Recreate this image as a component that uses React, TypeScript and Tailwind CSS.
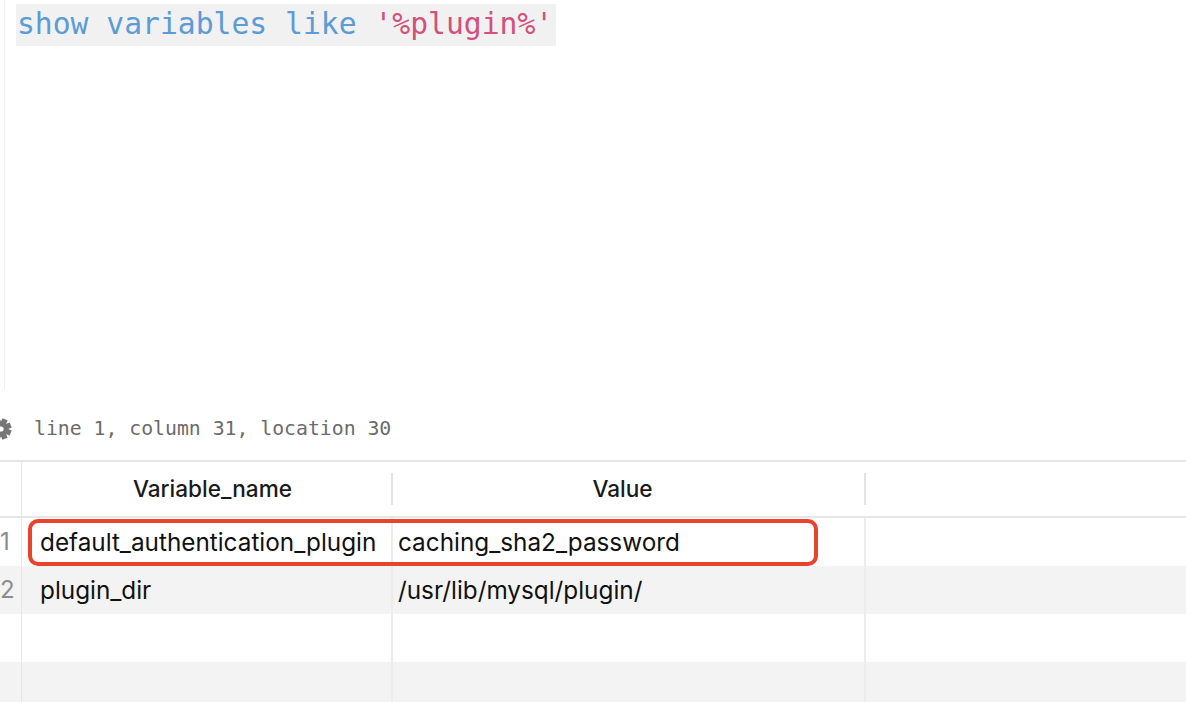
import React from "react";

const mono = { fontFamily: '"DejaVu Sans Mono", "Liberation Mono", monospace' };
const sans = { fontFamily: 'Inter, "Liberation Sans", sans-serif' };

function Gear() {
  const teeth = [];
  for (let i = 0; i < 8; i++) {
    teeth.push(
      <rect key={i} x={-2.8} y={-10.5} width={5.6} height={6} fill="#767676" transform={`rotate(${i * 45 + 22.5})`} />
    );
  }
  return (
    <svg width="13" height="22" viewBox="-1 -11 13 22" className="block">
      <g>
        {teeth}
        <circle cx={0} cy={0} r={7.6} fill="#767676" />
        <circle cx={0} cy={0} r={2.6} fill="#ffffff" />
      </g>
    </svg>
  );
}

const rows = [
  { n: "1", a: "default_authentication_plugin", b: "caching_sha2_password", bg: "bg-white" },
  { n: "2", a: "plugin_dir", b: "/usr/lib/mysql/plugin/", bg: "bg-[#f3f3f3]" },
  { n: "", a: "", b: "", bg: "bg-white" },
  { n: "", a: "", b: "", bg: "bg-[#f3f3f3]" },
];

export default function App() {
  return (
    <div className="w-[1186px] h-[702px] overflow-hidden bg-white relative flex flex-col">
      {/* Editor */}
      <div className="h-[389px] flex shrink-0">
        <div className="w-[5px] border-r border-[#eeeeee] shrink-0" />
        <div className="pl-[11px] pt-[4px]">
          <div
            className="h-[42px] w-[540px] bg-[#f1f1f1] flex items-center pl-[1px] pb-[2px] text-[29.7px] leading-none whitespace-pre"
            style={mono}
          >
            <span className="text-[#5b9bd7]">show variables like </span>
            <span className="text-[#d4507a]">'%plugin%'</span>
          </div>
        </div>
      </div>

      {/* Status line */}
      <div className="h-[71px] flex items-center pt-[9px] shrink-0">
        <div className="w-[13px] shrink-0">
          <Gear />
        </div>
        <span className="ml-[21px] text-[19.8px] leading-none text-[#6b6b6b] whitespace-pre" style={mono}>
          line 1, column 31, location 30
        </span>
      </div>

      <div className="h-[2px] bg-[#e5e5e5] shrink-0" />

      {/* Table */}
      <div className="relative flex-1" style={sans}>
        {/* header */}
        <div className="flex h-[56px] border-b-2 border-[#e6e6e6]">
          <div className="w-[22px] border-r border-[#e6e6e6] shrink-0" />
          <div className="w-[369px] flex items-center justify-center pl-[12px] text-[22.6px] font-medium text-[#1a1a1a] shrink-0">
            Variable_name
          </div>
          <div className="w-[2px] h-[32px] self-center bg-[#e3e3e3] shrink-0" />
          <div className="w-[471px] flex items-center justify-center pr-[12px] text-[22.6px] font-medium text-[#1a1a1a] shrink-0">
            Value
          </div>
          <div className="w-[2px] h-[32px] self-center bg-[#e3e3e3] shrink-0" />
          <div className="flex-1" />
        </div>
        {rows.map((r, i) => (
          <div key={i} className={`flex h-[48px] ${r.bg}`}>
            <div className="w-[22px] border-r border-[#e6e6e6] shrink-0 flex items-center overflow-hidden">
              <span className="text-[24px] text-[#8c8c8c] leading-none">{r.n}</span>
            </div>
            <div className="w-[369px] flex items-center pl-[18px] text-[24.3px] text-[#111111] shrink-0 whitespace-nowrap">
              {r.a}
            </div>
            <div className="w-[2px] bg-[#ececec] shrink-0" />
            <div className="w-[471px] flex items-center pl-[5px] text-[24.3px] text-[#111111] shrink-0 whitespace-nowrap">
              {r.b}
            </div>
            <div className="w-[2px] bg-[#ececec] shrink-0" />
            <div className="flex-1" />
          </div>
        ))}
        {/* highlight box */}
        <div className="absolute left-[28px] top-[57px] w-[790px] h-[47px] border-[4px] border-[#e8432d] rounded-[10px] pointer-events-none" />
      </div>
    </div>
  );
}
